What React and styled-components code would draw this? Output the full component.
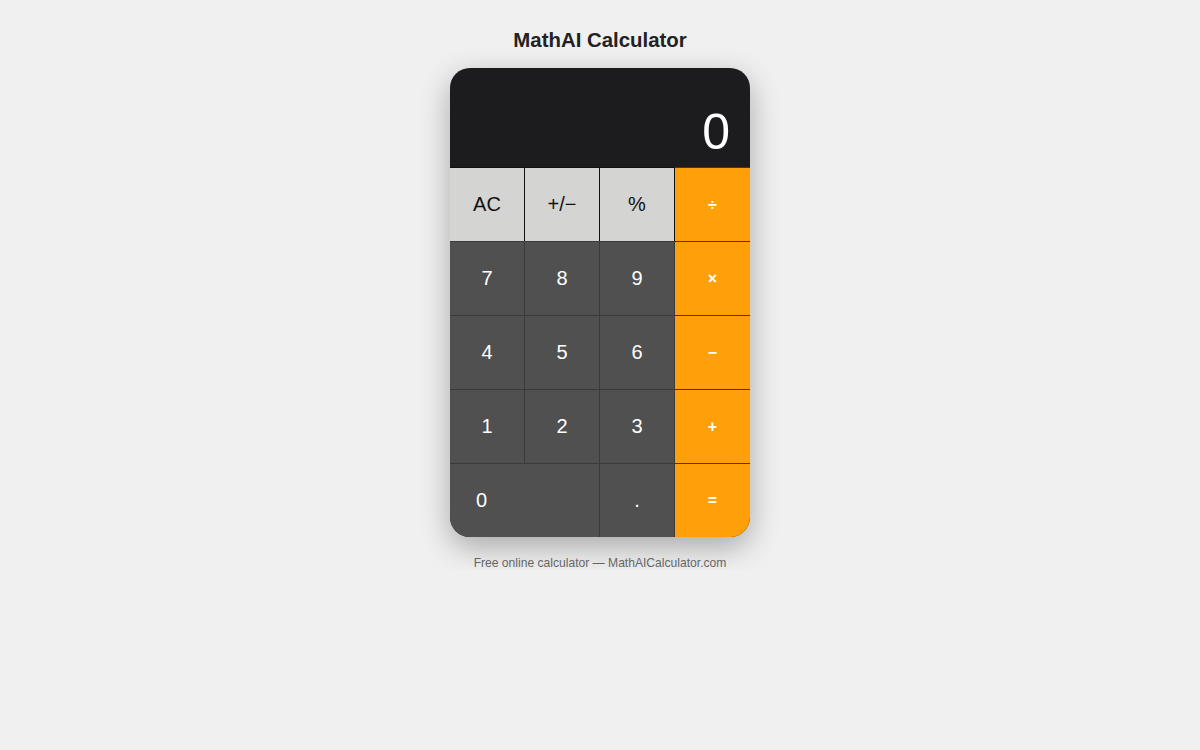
import React from 'react'
import styled, { createGlobalStyle } from 'styled-components'

const GlobalStyle = createGlobalStyle`
  html, body {
    margin: 0;
    padding: 0;
    background: #f0f0f0;
    font-family: "Liberation Sans", Arial, sans-serif;
  }
`

const keys = [
  { label: 'AC', kind: 'light' },
  { label: '+/−', kind: 'light' },
  { label: '%', kind: 'light' },
  { label: '÷', kind: 'op' },
  { label: '7', kind: 'dark' },
  { label: '8', kind: 'dark' },
  { label: '9', kind: 'dark' },
  { label: '×', kind: 'op' },
  { label: '4', kind: 'dark' },
  { label: '5', kind: 'dark' },
  { label: '6', kind: 'dark' },
  { label: '−', kind: 'op' },
  { label: '1', kind: 'dark' },
  { label: '2', kind: 'dark' },
  { label: '3', kind: 'dark' },
  { label: '+', kind: 'op' },
  { label: '0', kind: 'dark', wide: true },
  { label: '.', kind: 'dark' },
  { label: '=', kind: 'op' },
]

const palette = {
  light: { bg: '#d4d4d2', fg: '#111', line: '#111' },
  dark: { bg: '#505050', fg: '#fff', line: '#3a3a3a' },
  op: { bg: '#ff9f0a', fg: '#fff', line: '#5a3400' },
}

const App = () => {
  return (
    <Page>
      <GlobalStyle />
      <Title>MathAI Calculator</Title>
      <Calculator>
        <Display>0</Display>
        <Keypad>
          {keys.map((k) => (
            <Key key={k.label} $kind={k.kind} $wide={k.wide}>
              {k.label}
            </Key>
          ))}
        </Keypad>
      </Calculator>
      <Footer>Free online calculator — MathAICalculator.com</Footer>
    </Page>
  )
}

const Page = styled.main`
  display: flex;
  flex-direction: column;
  align-items: center;
  padding-top: 28px;
`

const Title = styled.h1`
  margin: 0 0 16px;
  font-size: 20.4px;
  line-height: 24px;
  font-weight: 700;
  color: #222;
`

const Calculator = styled.div`
  width: 300px;
  border-radius: 20px;
  overflow: hidden;
  background: #1c1c1e;
  box-shadow: 0 10px 30px rgba(0, 0, 0, 0.3);
`

const Display = styled.div`
  height: 99px;
  box-sizing: border-box;
  display: flex;
  align-items: flex-end;
  justify-content: flex-end;
  padding: 0 20px 5px;
  color: #fff;
  font-size: 50px;
  line-height: 1.2;
`

const Keypad = styled.div`
  display: grid;
  grid-template-columns: repeat(4, 1fr);
  grid-auto-rows: 74px;
`

const Key = styled.button`
  grid-column: ${(p) => (p.$wide ? 'span 2' : 'auto')};
  display: flex;
  align-items: center;
  justify-content: ${(p) => (p.$wide ? 'flex-start' : 'center')};
  padding: ${(p) => (p.$wide ? '0 0 0 26px' : '0')};
  border: none;
  border-top: 1px solid ${(p) => palette[p.$kind].line};
  border-right: 1px solid ${(p) => palette[p.$kind].line};
  background: ${(p) => palette[p.$kind].bg};
  color: ${(p) => palette[p.$kind].fg};
  font-family: "Liberation Sans", Arial, sans-serif;
  font-size: ${(p) => (p.$kind === 'op' ? '16px' : '20px')};
  font-weight: ${(p) => (p.$kind === 'op' ? 700 : 400)};
  cursor: pointer;

  &:nth-child(4n) {
    border-right: none;
  }
  &:last-child {
    border-right: none;
  }
`

const Footer = styled.p`
  margin: 19px 0 0;
  font-size: 12.1px;
  line-height: 14px;
  color: #666;
`

export default App
